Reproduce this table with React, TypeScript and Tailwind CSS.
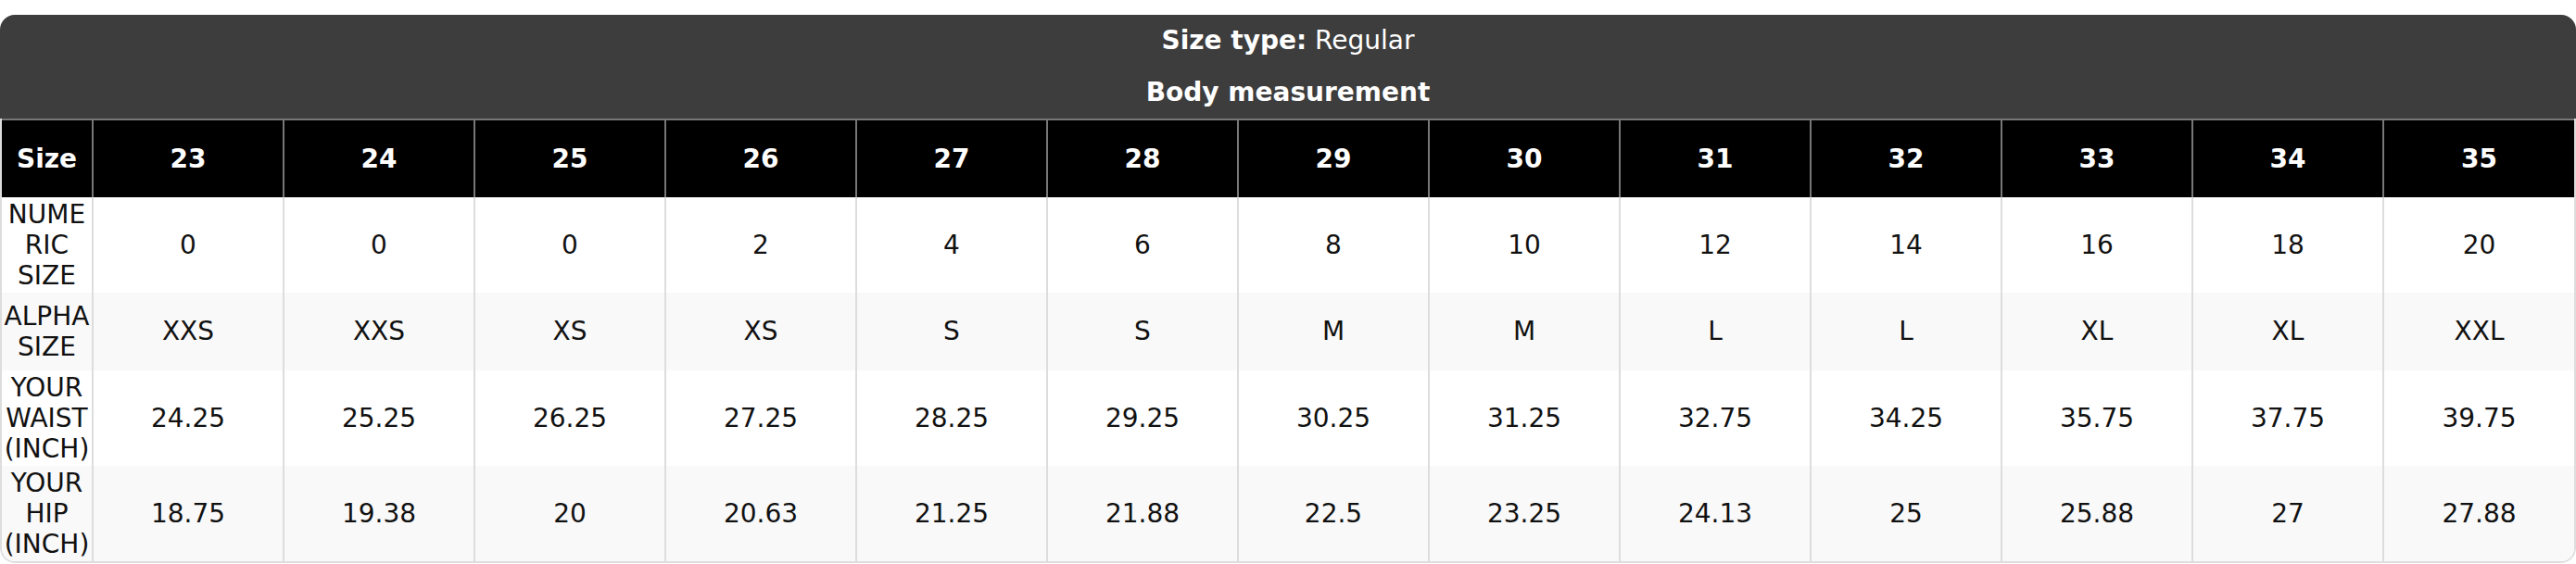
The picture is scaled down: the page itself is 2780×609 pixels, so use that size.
const sizes = [23, 24, 25, 26, 27, 28, 29, 30, 31, 32, 33, 34, 35]

const rows = [
  { label: 'NUMERIC SIZE', values: ['0', '0', '0', '2', '4', '6', '8', '10', '12', '14', '16', '18', '20'] },
  { label: 'ALPHA SIZE', values: ['XXS', 'XXS', 'XS', 'XS', 'S', 'S', 'M', 'M', 'L', 'L', 'XL', 'XL', 'XXL'] },
  {
    label: 'YOUR WAIST (INCH)',
    values: ['24.25', '25.25', '26.25', '27.25', '28.25', '29.25', '30.25', '31.25', '32.75', '34.25', '35.75', '37.75', '39.75'],
  },
  {
    label: 'YOUR HIP (INCH)',
    values: ['18.75', '19.38', '20', '20.63', '21.25', '21.88', '22.5', '23.25', '24.13', '25', '25.88', '27', '27.88'],
  },
]

const App = () => {
  return (
    <div className="bg-white pt-[16px] font-['DejaVu_Sans',sans-serif] text-[28px]">
      <div className="rounded-[16px] overflow-hidden">
        {/* Caption */}
        <div className="bg-[#3d3d3d] text-white text-center">
          <div className="py-[11px] leading-[34px]">
            <span className="font-bold">Size type:</span> Regular
          </div>
          <div className="py-[11px] leading-[34px] font-bold">Body measurement</div>
        </div>

        {/* Table */}
        <div className="border-2 border-t-0 border-[#dddddd] rounded-b-[16px] overflow-hidden">
          <table className="w-full table-fixed border-collapse">
            <colgroup>
              <col className="w-[98px]" />
              {sizes.map((s) => (
                <col key={s} />
              ))}
            </colgroup>
            <thead>
              <tr className="bg-black text-white">
                <th className="h-[84px] border-t-2 border-[#777777] px-[2px] font-bold">Size</th>
                {sizes.map((s) => (
                  <th key={s} className="h-[84px] border-t-2 border-l-2 border-[#777777] font-bold">
                    {s}
                  </th>
                ))}
              </tr>
            </thead>
            <tbody className="text-[#111111]">
              {rows.map((row, i) => (
                <tr key={row.label} className={i % 2 === 1 ? 'bg-[#f9f9f9]' : 'bg-white'}>
                  <td className="h-[84px] px-[2px] py-[2px] text-center leading-[33px] [overflow-wrap:anywhere]">
                    {row.label}
                  </td>
                  {row.values.map((v, j) => (
                    <td key={j} className="h-[84px] border-l-2 border-[#dddddd] py-[2px] text-center">
                      {v}
                    </td>
                  ))}
                </tr>
              ))}
            </tbody>
          </table>
        </div>
      </div>
    </div>
  )
}

export default App
